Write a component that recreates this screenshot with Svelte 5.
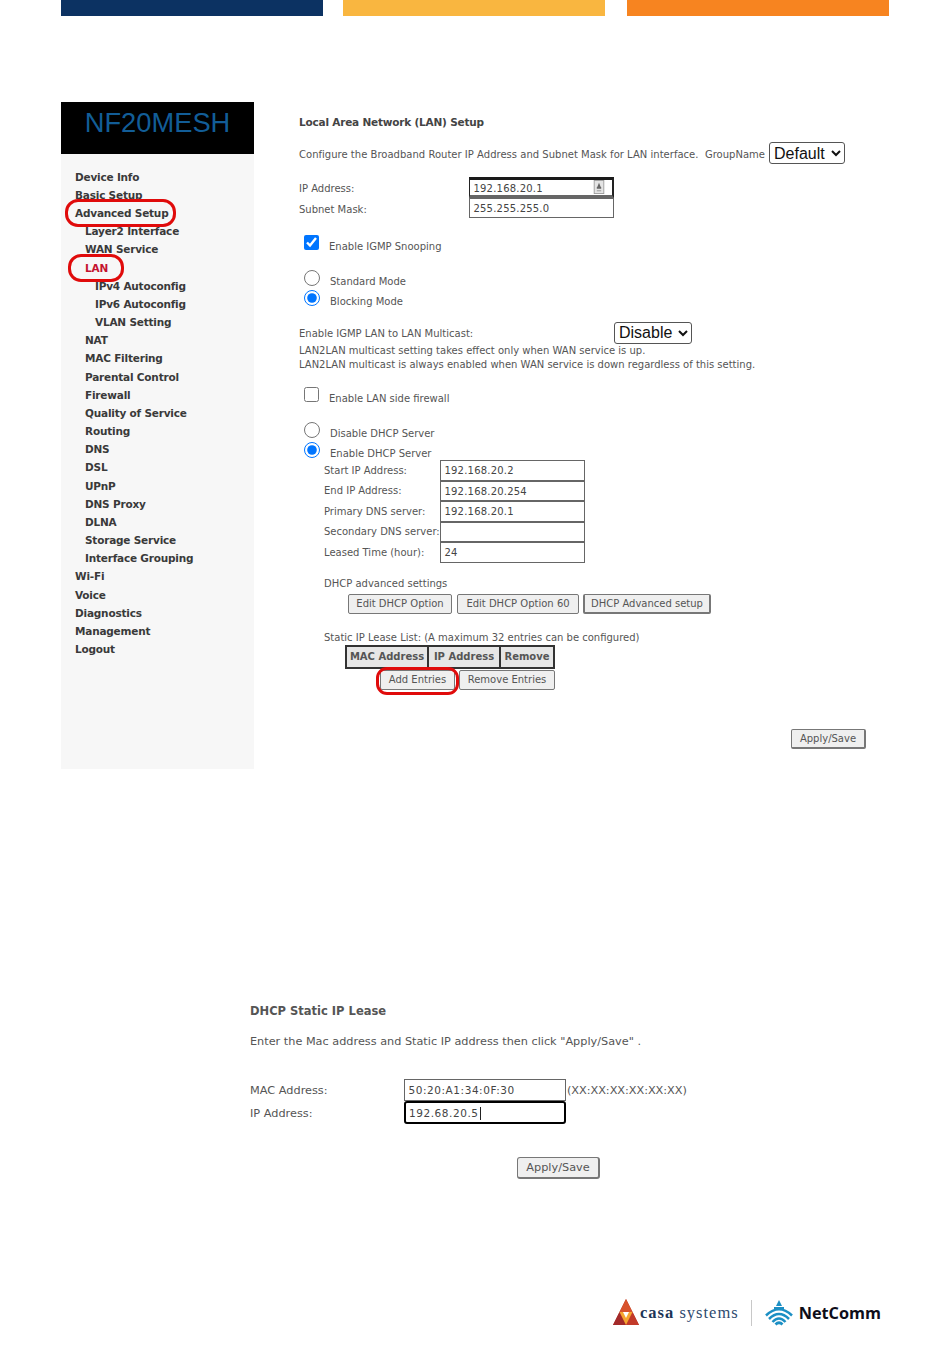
<script>
  const nav = [
    { t: 'Device Info', l: 0 }, { t: 'Basic Setup', l: 0 }, { t: 'Advanced Setup', l: 0, ring: 'ring-adv' },
    { t: 'Layer2 Interface', l: 1 }, { t: 'WAN Service', l: 1 }, { t: 'LAN', l: 1, red: true, ring: 'ring-lan' },
    { t: 'IPv4 Autoconfig', l: 2 }, { t: 'IPv6 Autoconfig', l: 2 }, { t: 'VLAN Setting', l: 2 },
    { t: 'NAT', l: 1 }, { t: 'MAC Filtering', l: 1 }, { t: 'Parental Control', l: 1 }, { t: 'Firewall', l: 1 },
    { t: 'Quality of Service', l: 1 }, { t: 'Routing', l: 1 }, { t: 'DNS', l: 1 }, { t: 'DSL', l: 1 }, { t: 'UPnP', l: 1 },
    { t: 'DNS Proxy', l: 1 }, { t: 'DLNA', l: 1 }, { t: 'Storage Service', l: 1 }, { t: 'Interface Grouping', l: 1 },
    { t: 'Wi-Fi', l: 0 }, { t: 'Voice', l: 0 }, { t: 'Diagnostics', l: 0 }, { t: 'Management', l: 0 }, { t: 'Logout', l: 0 }
  ];
  const dhcp = [
    ['Start IP Address:', '192.168.20.2'], ['End IP Address:', '192.168.20.254'], ['Primary DNS server:', '192.168.20.1'],
    ['Secondary DNS server:', ''], ['Leased Time (hour):', '24']
  ];
</script>

<div class="page">
  <div class="bars"><i class="navy"></i><i class="yellow"></i><i class="orange"></i></div>

  <section class="panel">
    <aside class="side">
      <div class="brand">NF20MESH</div>
      <nav>
        {#each nav as n}
          <div class="item lv{n.l}" class:red={n.red}>{n.t}{#if n.ring}<span class="ring {n.ring}"></span>{/if}</div>
        {/each}
      </nav>
    </aside>

    <div class="main">
      <h1>Local Area Network (LAN) Setup</h1>
      <div class="config">
        <span>Configure the Broadband Router IP Address and Subnet Mask for LAN interface.&nbsp; GroupName</span>
        <select class="sel seldef"><option>Default</option></select>
      </div>

      <div class="ipgroup">
        <div class="ipfield"><span class="lbl">IP Address:</span>
          <div class="inp focusbox">192.168.20.1
            <svg class="keyicon" viewBox="0 0 12 16" width="12" height="16"><rect x=".5" y=".5" width="11" height="15" fill="#e4e4e4" stroke="#999"/><path d="M6 3 8 8H4z" fill="#666"/><rect x="3.5" y="8" width="5" height="2" fill="#666"/><rect x="3.5" y="11.5" width="5" height="1.5" fill="#aaa"/></svg>
          </div>
        </div>
        <div class="ipfield sub"><span class="lbl">Subnet Mask:</span><div class="inp plain">255.255.255.0</div></div>
      </div>

      <label class="opt first"><input type="checkbox" checked /><span>Enable IGMP Snooping</span></label>
      <label class="opt radio r1"><input type="radio" name="m" /><span>Standard Mode</span></label>
      <label class="opt radio r2"><input type="radio" name="m" checked /><span>Blocking Mode</span></label>

      <div class="mcast"><span>Enable IGMP LAN to LAN Multicast:</span><select class="sel"><option>Disable</option></select></div>
      <p class="note">LAN2LAN multicast setting takes effect only when WAN service is up.<br />LAN2LAN multicast is always enabled when WAN service is down regardless of this setting.</p>

      <label class="opt fw"><input type="checkbox" /><span>Enable LAN side firewall</span></label>
      <label class="opt radio dh1"><input type="radio" name="d" /><span>Disable DHCP Server</span></label>
      <label class="opt radio r2"><input type="radio" name="d" checked /><span>Enable DHCP Server</span></label>

      <div class="dhcp">
        {#each dhcp as [k, v]}
          <div class="drow"><span class="dk">{k}</span><div class="inp dv">{v}</div></div>
        {/each}
      </div>

      <div class="adv">DHCP advanced settings</div>
      <div class="advbtns">
        <button class="btn b1">Edit DHCP Option</button>
        <button class="btn b2">Edit DHCP Option 60</button>
        <button class="btn b3">DHCP Advanced setup</button>
      </div>

      <div class="static">Static IP Lease List: (A maximum 32 entries can be configured)</div>
      <div class="lease"><b class="c1">MAC Address</b><b class="c2">IP Address</b><b class="c3">Remove</b></div>
      <div class="leasebtns">
        <button class="btn add">Add Entries<span class="ring ring-add"></span></button>
        <button class="btn rem">Remove Entries</button>
      </div>
      <div class="applyrow"><button class="btn apply">Apply/Save</button></div>
    </div>
  </section>

  <section class="lease-form">
    <h2>DHCP Static IP Lease</h2>
    <p class="enter">Enter the Mac address and Static IP address then click "Apply/Save" .</p>
    <div class="frow f1"><span class="flbl">MAC Address:</span><div class="inp finp">50:20:A1:34:0F:30</div><span class="hint">(XX:XX:XX:XX:XX:XX)</span></div>
    <div class="frow f2"><span class="flbl">IP Address:</span><div class="inp finp active">192.68.20.5<i class="caret"></i></div></div>
    <div class="fapply"><button class="btn fbtn">Apply/Save</button></div>
  </section>

  <footer class="logos">
    <svg class="casa-mark" viewBox="0 0 26 27" width="26" height="27">
      <path d="M13 0 26 26H0z" fill="#b5342b"/>
      <path d="M13 0 19.500 13H6.500z" fill="#d8522c"/>
      <path d="M0 26 6.500 13 13 26z" fill="#a32a2a"/>
      <path d="M26 26 19.500 13 13 26z" fill="#c23a2a"/>
      <path d="M6.500 13h13L13 26z" fill="#f6a630"/>
      <path d="M10 13h6l-3 6z" fill="#fff"/>
    </svg>
    <span class="casa"><b>casa</b> systems</span>
    <i class="divider"></i>
    <svg class="wifi" viewBox="0 0 28 26" width="28" height="26" fill="none" stroke="#1c8fc4">
      <path d="M14 0 17 6H11z" fill="#1c8fc4" stroke="none"/>
      <path d="M9 8h10" stroke-width="2"/>
      <path d="M1 15.500Q14 3 27 15.500M4 19Q14 9 24 19M7.500 22Q14 15 20.500 22" stroke-width="2.500"/>
      <path d="M10.500 24.500Q14 21 17.500 24.500" stroke-width="2.800"/>
    </svg>
    <span class="netcomm">NetComm</span>
  </footer>
</div>

<style>
  :global(body) { margin: 0; background: #fff; }
  .page { width: 950px; height: 1369px; position: relative; overflow: hidden; font-family: "DejaVu Sans", sans-serif; font-size: 10px; color: #555; }
  .bars { display: flex; padding-left: 61px; height: 16px; }
  .bars i { display: block; width: 262px; height: 16px; }
  .navy { background: #0c3262; }
  .yellow { background: #f9b640; margin-left: 20px; }
  .orange { background: #f78420; margin-left: 22px; }

  .panel { display: flex; margin: 86px 0 0 61px; height: 667px; }
  .side { width: 193px; background: #f7f7f7; flex: none; }
  .brand { height: 52px; background: #000; color: #125d97; font: 27.3px/42px "Liberation Sans", sans-serif; text-align: center; }
  nav { padding-top: 13.7px; }
  .item { position: relative; height: 18.18px; line-height: 18px; font-weight: 700; font-size: 10.5px; color: #3a3a3a; letter-spacing: -.2px; }
  .lv0 { padding-left: 14px; }
  .lv1 { padding-left: 24px; }
  .lv2 { padding-left: 34px; }
  .red { color: #c4122f; }
  .ring { position: absolute; border: 3.5px solid #e00b0b; box-sizing: border-box; }
  .ring-adv { left: 4px; top: -5px; width: 111px; height: 28px; border-radius: 13px; }
  .ring-lan { left: 7px; top: -5px; width: 56px; height: 28px; border-radius: 13px; }
  .ring-add { left: -5px; top: -4px; width: 83px; height: 28px; border-radius: 11px; }

  .main { flex: 1; padding-left: 45px; }
  h1 { margin: 12px 0 0; font-size: 10.5px; line-height: 16px; color: #444; font-weight: 700; letter-spacing: -.2px; }
  .config { display: flex; align-items: center; justify-content: space-between; width: 546px; height: 22px; margin-top: 12px; white-space: nowrap; }
  .config span { letter-spacing: .02px; padding-top: 2px; }
  .sel { font: 16px "Liberation Sans", sans-serif; color: #111; background: #fff; border: 1px solid #555; border-radius: 3px; height: 22px; padding: 0; }
  .seldef { width: 76px; }
  .ipgroup { margin-top: 13px; }
  .ipfield { display: flex; align-items: center; height: 21px; }
  .ipfield.sub { height: 20px; }
  .lbl { width: 170px; padding-top: 2px; }
  .inp { box-sizing: border-box; background: #fff; border: 1px solid #666; color: #444; padding: 1px 0 0 3.5px; display: flex; align-items: center; font-size: 10px; letter-spacing: .2px; }
  .focusbox { width: 145px; height: 21px; border: 0; border-top: 3px solid #1a1a1a; border-left: 1px solid #222; border-right: 2px solid #222; border-bottom: 3px solid #666; position: relative; }
  .keyicon { position: absolute; right: 7px; top: 0; width: 12px; height: 14px; }
  .plain { width: 145px; height: 20px; }

  .opt { display: flex; align-items: flex-start; height: 18px; }
  .opt input { margin: 0; accent-color: #0075ff; flex: none; }
  .opt span { line-height: 14px; }
  .opt input[type="checkbox"] { width: 15px; height: 15px; margin-left: 5px; }
  .opt input[type="checkbox"] + span { margin: 5px 0 0 10px; }
  .opt input[type="radio"] { width: 16px; height: 16px; margin-left: 5px; }
  .opt input[type="radio"] + span { margin: 5px 0 0 10px; }
  .first { margin-top: 17px; }
  .r1 { margin-top: 17px; }
  .r2 { margin-top: 2px; }
  .mcast { display: flex; align-items: center; justify-content: space-between; width: 393px; height: 21px; margin-top: 14px; }
  .mcast span { padding-top: 2px; }
  .mcast .sel { width: 78px; }
  .note { margin: 0; line-height: 14px; padding-top: 1px; }
  .fw { margin-top: 15px; }
  .dh1 { margin-top: 17px; }
  .dhcp { padding-left: 25px; margin-top: 0; }
  .drow { display: flex; align-items: center; height: 20.5px; white-space: nowrap; }
  .dk { width: 116px; }
  .dv { width: 145px; height: 20.5px; }

  .adv { padding-left: 25px; margin-top: 14px; line-height: 14px; }
  .advbtns { display: flex; margin: 3px 0 0 49px; }
  .btn { position: relative; box-sizing: border-box; height: 20px; padding: 0; background: #efefef; border: 1px solid #777; border-radius: 2px; color: #555; font: 10px "DejaVu Sans", sans-serif; white-space: nowrap; }
  .b1 { width: 104px; }
  .b2 { width: 122px; margin-left: 5px; }
  .b3 { width: 128px; margin-left: 4px; border-width: 1px 2px 2px 2px; }
  .static { padding-left: 25px; margin-top: 17px; line-height: 14px; }
  .lease { display: flex; margin: 0 0 0 46px; height: 24px; width: 210px; box-sizing: border-box; border: 2px solid #333; background: #e6e6e6; font-size: 10px; color: #555; }
  .lease b { display: flex; align-items: center; justify-content: center; box-sizing: border-box; white-space: nowrap; }
  .c1 { width: 82px; border-right: 2px solid #333; }
  .c2 { width: 72px; border-right: 2px solid #333; }
  .c3 { flex: 1; }
  .leasebtns { display: flex; margin: 1px 0 0 81px; }
  .add { width: 75px; }
  .rem { width: 96px; margin-left: 4px; }
  .applyrow { margin: 39px 0 0 492px; }
  .apply { width: 75px; border-width: 1px 2px 2px 1px; }

  .lease-form { position: relative; margin: 234px 0 0 250px; font-size: 11.3px; }
  h2 { margin: 0; font-size: 11.5px; line-height: 16px; font-weight: 700; color: #555; }
  .enter { margin: 15px 0 0; line-height: 16px; font-size: 11.28px; }
  .frow { display: flex; align-items: center; font-size: 11.3px; }
  .f1 { margin-top: 28px; height: 23px; }
  .f2 { height: 23px; }
  .flbl { width: 154px; padding-top: 2px; }
  .finp { width: 162px; height: 22px; font-size: 10.5px; letter-spacing: .55px; }
  .active { border: 2.5px solid #000; border-radius: 3px; height: 23px; color: #444; padding-left: 3px; }
  .caret { display: block; width: 1px; height: 13px; background: #222; margin-left: 1px; }
  .hint { margin-left: 1px; letter-spacing: -.05px; padding-top: 2px; }
  .fapply { margin: 33px 0 0 267px; }
  .fbtn { width: 83px; height: 22px; font-size: 11.3px; border-radius: 3px; border-width: 1px 2px 2px 1px; }

  .logos { display: flex; align-items: center; position: absolute; left: 613px; top: 1299px; height: 27px; }
  .casa { font: 16.5px "Liberation Serif", serif; color: #2e4a6e; margin-left: 1px; letter-spacing: 1px; white-space: nowrap; }
  .casa b { color: #1b3557; }
  .divider { width: 1px; height: 26px; background: #c8c8c8; margin: 0 13px 0 12px; }
  .netcomm { font: 700 16.3px "Open Sans", sans-serif; color: #0e0e1a; margin-left: 6px; }
</style>
